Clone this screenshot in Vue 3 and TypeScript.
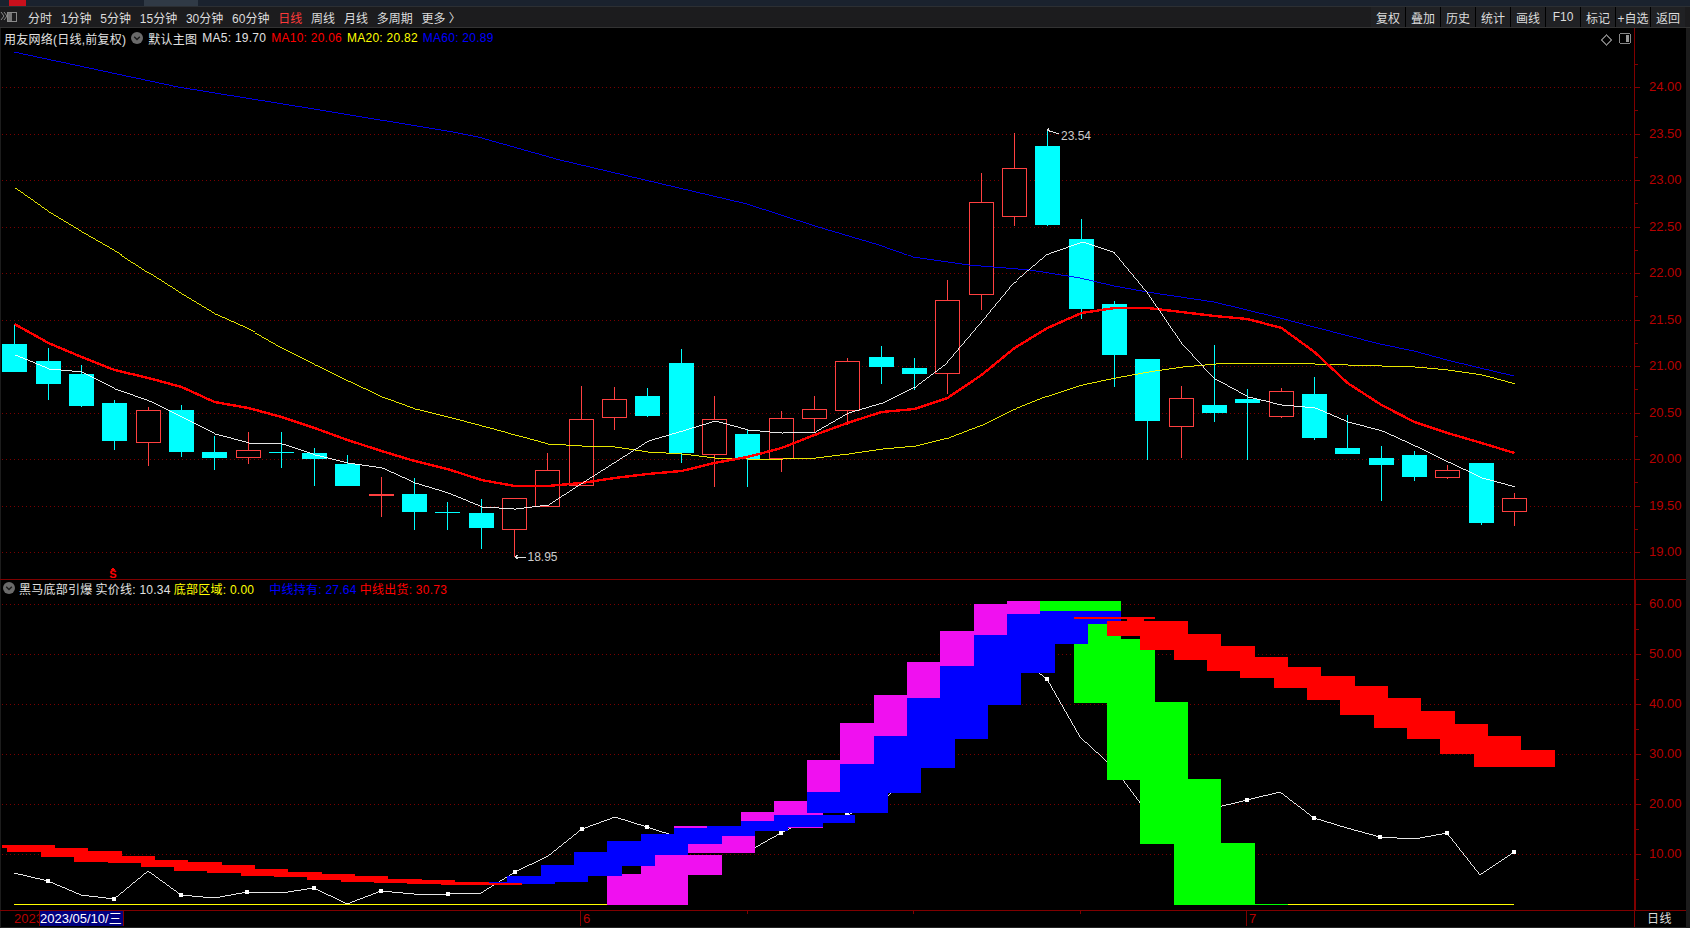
<script setup lang="ts">
type Candle = { i: number; up: boolean; top: number; bottom: number; hi: number; lo: number }
type Box = { x: number; y: number; w: number; h: number }
type Num4 = [number, number, number, number]

const periods = ['分时', '1分钟', '5分钟', '15分钟', '30分钟', '60分钟', '日线', '周线', '月线', '多周期', '更多 〉']
const tools = ['复权', '叠加', '历史', '统计', '画线', 'F10', '标记', '+自选', '返回']
const dateTicks = [747, 913, 1080]

const centre = (i: number) => Math.round(14.2 + 33.33 * i) + 0.5

// [up, bodyTop, bodyBottom, wickHigh, wickLow]
const raw: [number, number, number, number, number][] = [
  [0, 344, 372, 324, 372], [0, 361, 384, 348, 400], [0, 374, 406, 365, 407], [0, 403, 441, 400, 450],
  [1, 410, 443, 407, 466], [0, 410, 452, 405, 457], [0, 452, 458, 436, 470], [1, 450, 458, 432, 464],
  [0, 452, 452, 432, 468], [0, 453, 459, 448, 486], [0, 464, 486, 455, 486], [2, 495, 495, 477, 517],
  [0, 494, 512, 478, 530], [0, 512, 512, 502, 530], [0, 513, 528, 499, 549], [1, 498, 530, 498, 557],
  [1, 470, 507, 453, 507], [1, 419, 486, 386, 486], [1, 399, 418, 387, 430], [0, 396, 416, 388, 417],
  [0, 363, 453, 349, 463], [1, 419, 455, 396, 487], [0, 434, 459, 430, 487], [1, 418, 459, 411, 472],
  [1, 409, 419, 396, 432], [1, 361, 411, 358, 425], [0, 357, 367, 346, 384], [0, 368, 374, 358, 390],
  [1, 300, 374, 280, 394], [1, 202, 295, 173, 310], [1, 168, 217, 133, 226], [0, 146, 225, 129, 226],
  [0, 239, 309, 219, 319], [0, 304, 355, 301, 387], [0, 359, 421, 359, 460], [1, 398, 427, 386, 458],
  [0, 405, 413, 345, 422], [0, 399, 403, 389, 460], [1, 391, 417, 388, 418], [0, 394, 438, 377, 440],
  [0, 448, 454, 415, 454], [0, 458, 465, 446, 501], [0, 455, 477, 451, 481], [1, 470, 478, 465, 479],
  [0, 463, 523, 463, 525], [1, 498, 512, 493, 526],
]
const candles: (Candle & { doji: boolean; thick: boolean })[] = raw.map((r, i) => ({
  i, up: r[0] > 0, top: r[1], bottom: r[2], hi: r[3], lo: r[4], doji: r[1] === r[2], thick: r[0] === 2,
}))

const byIndex = (ys: number[]) => ys.map((y, i) => `${centre(i)},${y}`).join(' ')

const ma5 = byIndex([355, 369, 372, 389, 401, 417, 434, 443, 444, 455, 463, 468, 483, 493, 507, 509, 505, 483, 462, 441, 431, 421, 430, 433, 432, 413, 403, 387, 362, 322, 282, 254, 242, 253, 293, 343, 379, 397, 405, 408, 422, 431, 446, 462, 478, 487])
const ma10 = byIndex([324, 343, 357, 370, 378, 387, 402, 408, 417, 428, 440, 451, 461, 469, 480, 486, 486, 483, 478, 474, 471, 463, 457, 448, 435, 423, 412, 409, 398, 375, 348, 328, 313, 308, 308, 312, 316, 319, 328, 352, 383, 405, 422, 433, 443, 453])
const ma20 = byIndex([188, 212, 232, 251, 273, 294, 314, 329, 348, 365, 381, 397, 409, 417, 426, 435, 444, 446, 447, 452, 454, 458, 459, 459, 458, 454, 449, 446, 438, 425, 409, 396, 385, 378, 372, 367, 364, 363, 363, 364, 365, 366, 367, 370, 375, 384])
const ma60 = '14,52 178,87 314,109 453,132 478,137 560,160 747,204 815,226 879,245 913,257 969,265 1030,270 1080,278 1114,286 1147,292 1214,302 1247,310 1280,318 1314,327 1380,344 1414,351 1447,360 1480,368 1514,376'

const priceTicks = Array.from({ length: 11 }, (_, k) => ({ y: Math.round(87 + 46.5 * k), label: (24 - k * 0.5).toFixed(2) }))
const priceMinor = priceTicks.slice(0, 10).map(t => t.y + 23).concat(64)
const macdTicks = Array.from({ length: 6 }, (_, k) => ({ y: 604 + 50 * k, label: (60 - k * 10).toFixed(2) }))
const macdMinor = [629, 679, 729, 779, 829, 879]

// band rectangles, read off crops of the chart at their own scale
const mapRect = (x0: number, kx: number, y0: number) => (r: Num4): Box => {
  const x = Math.round(x0 + r[0] / kx)
  const y = Math.round(y0 + r[2] / 3)
  return { x, y, w: Math.round(x0 + r[1] / kx) - x, h: Math.round(y0 + r[3] / 3) - y }
}
const a = mapRect(0, 2.613, 570)
const b = mapRect(560, 2.613, 590)
const c = mapRect(1060, 2.489, 590)

const magenta: Box[] = ([
  [123, 335, 852, 945], [212, 423, 828, 855], [248, 423, 795, 855], [335, 510, 762, 789], [423, 510, 738, 789],
  [298, 384, 708, 714], [596, 686, 708, 714], [473, 559, 666, 693], [559, 686, 633, 675], [645, 732, 510, 606],
  [732, 821, 399, 522], [821, 907, 315, 438], [907, 993, 216, 324], [993, 1082, 123, 228], [1082, 1168, 42, 135], [1168, 1254, 33, 72],
] as Num4[]).map(b)

const blue: Box[] = [
  ...([[1277, 1363, 936, 942], [1325, 1450, 918, 942], [1414, 1537, 885, 936]] as Num4[]).map(a),
  ...([
    [0, 73, 825, 875], [37, 162, 786, 858], [123, 248, 753, 828], [212, 335, 732, 795], [298, 423, 714, 762],
    [384, 510, 708, 738], [473, 596, 693, 723], [559, 686, 675, 711], [686, 771, 675, 699], [645, 857, 606, 669],
    [732, 943, 522, 609], [821, 1032, 438, 534], [907, 1119, 324, 447], [993, 1205, 228, 345], [1082, 1293, 135, 249],
    [1168, 1380, 72, 162], [1254, 1466, 63, 102],
  ] as Num4[]).map(b),
]

const green: Box[] = [
  b([1254, 1466, 33, 63]),
  ...([
    [70, 152, 102, 162], [35, 236, 161, 339], [152, 236, 147, 180], [117, 319, 336, 570],
    [199, 401, 567, 762], [284, 485, 759, 945], [485, 567, 942, 945],
  ] as Num4[]).map(c),
]

const stepBand = (tops: [number, number][], bottoms: [number, number][], end: number, map: (u: number, v: number) => string) => {
  const pts: string[] = []
  tops.forEach(([u, v], k) => {
    pts.push(map(u, v), map(k + 1 < tops.length ? tops[k + 1][0] : end, v))
  })
  for (let k = bottoms.length - 1; k >= 0; k--) {
    const [u, v] = bottoms[k]
    pts.push(map(k + 1 < bottoms.length ? bottoms[k + 1][0] : end, v), map(u, v))
  }
  return pts.join(' ')
}
const mapA = (u: number, v: number) => `${Math.round(u / 2.613)},${Math.round(570 + v / 3)}`
const mapC = (u: number, v: number) => `${Math.round(1060 + u / 2.489)},${Math.round(590 + v / 3)}`

const redLeft = stepBand(
  [[5, 825], [144, 834], [230, 843], [320, 858], [405, 870], [492, 876], [580, 885], [666, 897], [753, 906], [841, 912], [928, 918], [1014, 927], [1103, 930], [1190, 936], [1277, 938]],
  [[5, 834], [18, 846], [107, 861], [193, 876], [281, 879], [368, 891], [455, 903], [542, 909], [630, 918], [717, 921], [802, 930], [891, 936], [978, 939], [1064, 942], [1152, 945]],
  1363, mapA,
)
const redRight = stepBand(
  [[117, 93], [319, 132], [401, 168], [485, 201], [567, 231], [650, 258], [734, 288], [816, 324], [898, 363], [983, 402], [1065, 438], [1147, 480]],
  [[117, 138], [199, 180], [284, 210], [365, 243], [447, 264], [533, 294], [615, 330], [697, 375], [781, 414], [864, 447], [946, 492], [1030, 531]],
  1232, mapC,
)
const redBits: Box[] = ([[35, 236, 82, 87], [168, 208, 88, 93]] as Num4[]).map(c)

const strength: [number, number][] = [
  [14, 873], [48, 881], [81, 895], [114, 899], [148, 871], [181, 895], [214, 898], [247, 892], [281, 893], [314, 888],
  [347, 904], [381, 891], [414, 894], [448, 894], [481, 893], [515, 872], [548, 856], [582, 829], [615, 817], [647, 827],
  [681, 838], [714, 845], [747, 852], [781, 833], [814, 817], [847, 815], [881, 802], [914, 773], [948, 740], [981, 700],
  [1014, 655], [1047, 679], [1080, 737], [1114, 768], [1147, 812], [1180, 812], [1214, 808], [1247, 800], [1280, 792], [1314, 818],
  [1347, 828], [1380, 837], [1414, 839], [1447, 833], [1480, 875], [1514, 852],
]
const strengthLine = strength.map(p => p.join(',')).join(' ')
const strengthDots = strength.filter((_, i) => i % 2 === 1)
</script>

<template>
  <div class="screen">
    <div class="strip">
      <span class="strip-tab"></span>
      <span class="strip-light"></span>
    </div>

    <header class="toolbar">
      <svg class="corner-icon" width="18" height="12" viewBox="0 0 18 12" aria-hidden="true">
        <path d="M1 1l3 4-3 4M4 1l3 4-3 4" fill="none" stroke="#8a8a8a" stroke-width="1" />
        <rect x="7.5" y="1.5" width="9" height="9" fill="none" stroke="#8a8a8a" />
        <rect x="8" y="2" width="4" height="8" fill="#777" />
      </svg>
      <nav class="periods">
        <span v-for="p in periods" :key="p" class="period" :class="{ active: p === '日线' }">{{ p }}</span>
      </nav>
      <div class="tools">
        <span v-for="t in tools" :key="t" class="tool">{{ t }}</span>
      </div>
    </header>

    <section class="pane pane-price">
      <svg class="chart" width="1690" height="551" viewBox="0 28 1690 551" shape-rendering="crispEdges">
        <line v-for="t in priceTicks" :key="t.y" class="grid" x1="2" :y1="t.y + 0.5" x2="1634" :y2="t.y + 0.5" />
        <line x1="1634.5" y1="28" x2="1634.5" y2="579" class="axis" />
        <line v-for="t in priceTicks" :key="'m' + t.y" class="axis" x1="1635" :y1="t.y + 0.5" x2="1640" :y2="t.y + 0.5" />
        <line v-for="y in priceMinor" :key="'n' + y" class="axis" x1="1635" :y1="y + 0.5" x2="1638" :y2="y + 0.5" />
        <text v-for="t in priceTicks" :key="'l' + t.y" class="axis-label" x="1649" :y="t.y + 4">{{ t.label }}</text>

        <g v-for="k in candles" :key="k.i">
          <line :x1="centre(k.i)" :y1="k.hi" :x2="centre(k.i)" :y2="k.lo" :stroke="k.up ? '#ff4040' : '#00ffff'" />
          <rect v-if="k.thick" :x="centre(k.i) - 12.5" :y="k.top - 1" width="25" height="2" fill="#ff4040" />
          <line v-else-if="k.doji" :x1="centre(k.i) - 12.5" :y1="k.top + 0.5" :x2="centre(k.i) + 12.5" :y2="k.top + 0.5" stroke="#00ffff" />
          <rect v-else-if="k.up" :x="centre(k.i) - 12" :y="k.top + 0.5" width="24" :height="k.bottom - k.top - 1" fill="#000" stroke="#ff4040" />
          <rect v-else :x="centre(k.i) - 12.5" :y="k.top" width="25" :height="k.bottom - k.top" fill="#00ffff" />
        </g>

        <polyline class="ma" :points="ma60" stroke="#0000ff" />
        <polyline class="ma" :points="ma20" stroke="#ffff00" />
        <polyline class="ma thick" :points="ma10" stroke="#ff0000" />
        <polyline class="ma" :points="ma5" stroke="#ffffff" />

        <path d="M1047.5 130l1.5-1.5M1047.5 130l3 1.5M1047.5 130l11 4" class="pointer" />
        <text class="peak" x="1061" y="140">23.54</text>
        <path d="M515 557h11M515 557l3-2M515 557l3 2" class="pointer" />
        <text class="peak" x="527.5" y="561">18.95</text>

        <path d="M110.5 570l2.5-3 2.5 3z" fill="#ff0000" />
        <text class="sell" x="113" y="578">S</text>

        <path d="M1606.5 35l5 5-5 5-5-5z" fill="none" stroke="#777" />
        <rect x="1619.5" y="33.5" width="11" height="10" rx="2" fill="none" stroke="#888" />
        <rect x="1626" y="35" width="3" height="7" fill="#999" />
      </svg>
      <div class="legend legend-price">
        <span class="white">用友网络(日线,前复权)</span>
        <svg class="chevron" width="12" height="12" viewBox="0 0 12 12" aria-hidden="true">
          <circle cx="6" cy="6" r="6" fill="#6a6a6a" />
          <path d="M3.2 4.8L6 7.6l2.8-2.8" fill="none" stroke="#1a1a1a" stroke-width="1.4" />
        </svg>
        <span class="white">默认主图</span>
        <span class="white">MA5: 19.70</span>
        <span class="red">MA10: 20.06</span>
        <span class="yellow">MA20: 20.82</span>
        <span class="blue">MA60: 20.89</span>
      </div>
    </section>

    <section class="pane pane-signal">
      <svg class="chart" width="1690" height="330" viewBox="0 580 1690 330" shape-rendering="crispEdges">
        <line v-for="t in macdTicks" :key="t.y" class="grid" x1="2" :y1="t.y + 0.5" x2="1634" :y2="t.y + 0.5" />
        <line x1="1635" y1="580" x2="1635" y2="910" class="axis wide" />
        <line v-for="t in macdTicks" :key="'m' + t.y" class="axis" x1="1636" :y1="t.y + 0.5" x2="1641" :y2="t.y + 0.5" />
        <line v-for="y in macdMinor" :key="'n' + y" class="axis" x1="1636" :y1="y + 0.5" x2="1639" :y2="y + 0.5" />
        <text v-for="t in macdTicks" :key="'l' + t.y" class="axis-label" x="1649" :y="t.y + 4">{{ t.label }}</text>

        <polyline class="ma" :points="strengthLine" stroke="#ffffff" />
        <rect v-for="p in strengthDots" :key="p[0]" :x="p[0] - 2" :y="p[1] - 2" width="4" height="4" fill="#fff" />
        <line x1="14" y1="904.5" x2="607" y2="904.5" stroke="#ffff00" />
        <line x1="1288" y1="904.5" x2="1514" y2="904.5" stroke="#ffff00" />

        <rect v-for="(r, n) in magenta" :key="'p' + n" :x="r.x" :y="r.y" :width="r.w" :height="r.h" fill="#f010f0" />
        <rect v-for="(r, n) in blue" :key="'b' + n" :x="r.x" :y="r.y" :width="r.w" :height="r.h" fill="#0000ff" />
        <rect v-for="(r, n) in green" :key="'g' + n" :x="r.x" :y="r.y" :width="r.w" :height="r.h" fill="#00ff00" />
        <polygon :points="redLeft" fill="#ff0000" />
        <polygon :points="redRight" fill="#ff0000" />
        <rect v-for="(r, n) in redBits" :key="'r' + n" :x="r.x" :y="r.y" :width="r.w" :height="r.h" fill="#ff0000" />
      </svg>
      <div class="legend legend-signal">
        <svg class="chevron lead" width="12" height="12" viewBox="0 0 12 12" aria-hidden="true">
          <circle cx="6" cy="6" r="6" fill="#6a6a6a" />
          <path d="M3.2 4.8L6 7.6l2.8-2.8" fill="none" stroke="#1a1a1a" stroke-width="1.4" />
        </svg>
        <span class="white">黑马底部引爆</span>
        <span class="white">实价线: 10.34</span>
        <span class="yellow">底部区域: 0.00</span>
        <span class="blue spaced">中线持有: 27.64</span>
        <span class="red">中线出货: 30.73</span>
      </div>
    </section>

    <footer class="dates">
      <div class="date-track">
        <span class="year">2023</span>
        <span class="cursor-date">2023/05/10/三</span>
        <span class="month first">6</span>
        <span v-for="x in dateTicks" :key="x" class="date-tick" :style="{ left: x + 'px' }"></span>
        <span class="month second">7</span>
      </div>
      <span class="period-name">日线</span>
    </footer>
  </div>
</template>

<style scoped>
.screen {
  position: relative;
  width: 1690px;
  height: 928px;
  background: #000;
  overflow: hidden;
  display: flex;
  flex-direction: column;
  font-family: "Liberation Sans", "Noto Sans CJK SC", sans-serif;
  font-size: 12px;
  color: #ddd;
}
.screen::before,
.screen::after {
  content: "";
  position: absolute;
  top: 28px;
  bottom: 0;
  background: #1c1c1c;
}
.screen::before {
  left: 0;
  width: 1px;
}
.screen::after {
  right: 0;
  width: 4px;
}
.strip {
  height: 6px;
  flex: none;
  background: #1a222e;
  display: flex;
  border-bottom: 1px solid #2c2f33;
}
.strip-tab {
  width: 17px;
  margin-left: 9px;
  background: #c8101c;
}
.strip-light {
  width: 54px;
  margin-left: 118px;
  background: #303a46;
}
.toolbar {
  height: 20px;
  flex: none;
  display: flex;
  align-items: stretch;
  background: #1c1c1e;
  border-bottom: 1px solid #333;
}
.corner-icon {
  flex: none;
  align-self: center;
  margin-right: 10px;
}
.periods {
  display: flex;
  align-items: center;
  gap: 8.8px;
}
.period.active {
  color: #ff3a3a;
}
.tools {
  margin-left: auto;
  margin-right: 5px;
  display: flex;
  gap: 1px;
  background: #000;
}
.tool {
  width: 34px;
  display: flex;
  align-items: center;
  justify-content: center;
  background: #202124;
  white-space: nowrap;
}
.pane {
  position: relative;
  flex: none;
}
.pane-price {
  height: 551px;
  border-bottom: 1px solid #7f0000;
}
.pane-signal {
  height: 330px;
  border-bottom: 1px solid #7f0000;
}
.chart {
  display: block;
  overflow: visible;
}
.grid {
  stroke: #7a0000;
  stroke-dasharray: 1 3;
}
.axis {
  stroke: #800000;
}
.axis.wide {
  stroke-width: 2;
}
.axis-label {
  font-family: "Liberation Sans", sans-serif;
  font-size: 13px;
  fill: #b80000;
}
.ma {
  fill: none;
  stroke-width: 0.9;
}
.ma.thick {
  stroke-width: 2.4;
}
.pointer {
  fill: none;
  stroke: #ddd;
}
.peak {
  font-size: 12px;
  fill: #ccc;
}
.sell {
  font-size: 11px;
  font-weight: bold;
  fill: #ff0000;
  text-anchor: middle;
}
.legend {
  position: absolute;
  left: 4px;
  display: flex;
  align-items: center;
  gap: 5px;
  white-space: nowrap;
  letter-spacing: 0.25px;
}
.legend-price {
  top: 0;
  height: 20px;
}
.legend-signal {
  top: 0;
  left: 3px;
  height: 16px;
  gap: 3px;
}
.chevron {
  flex: none;
}
.chevron.lead {
  margin-right: 1px;
}
.white {
  color: #e2e2e2;
}
.red {
  color: #ff0000;
}
.yellow {
  color: #ffff00;
}
.blue {
  color: #0000ff;
}
.spaced {
  margin-left: 12px;
}
.dates {
  height: 16px;
  flex: none;
  display: flex;
  border-bottom: 1px solid #222;
}
.date-track {
  position: relative;
  width: 1634px;
  flex: none;
  border-right: 1px solid #7f0000;
  color: #b80000;
  font-size: 13px;
  line-height: 16px;
}
.year {
  position: absolute;
  left: 14px;
  white-space: nowrap;
}
.cursor-date {
  position: absolute;
  left: 39px;
  width: 83px;
  height: 15px;
  background: #000080;
  border-left: 1px solid #7f0000;
  border-right: 1px solid #7f0000;
  color: #fff;
  white-space: nowrap;
  line-height: 15px;
}
.month {
  position: absolute;
  top: 0;
  height: 15px;
  border-left: 1px solid #7f0000;
  padding-left: 2px;
  line-height: 15px;
}
.month.first {
  left: 580px;
}
.month.second {
  left: 1246px;
}
.date-tick {
  position: absolute;
  top: 0;
  width: 1px;
  height: 3px;
  background: #7f0000;
}
.period-name {
  margin-left: 12px;
  line-height: 16px;
  letter-spacing: 0.5px;
}
</style>
